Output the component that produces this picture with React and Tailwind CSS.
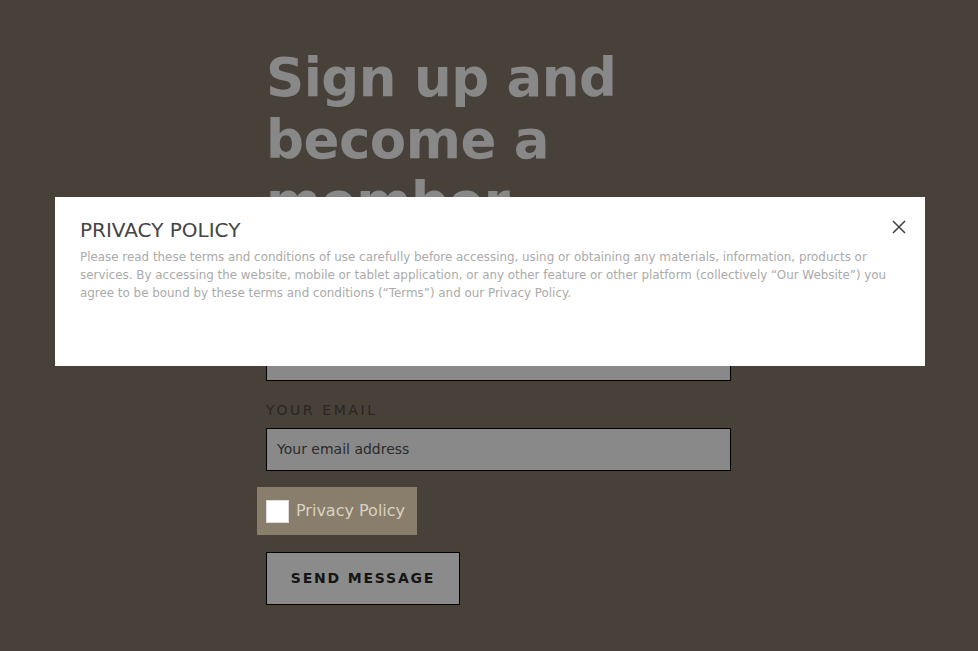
import React from "react";

export default function App() {
  const font = { fontFamily: "'DejaVu Sans', 'Noto Sans', sans-serif" };
  return (
    <div className="relative w-[978px] h-[651px] overflow-hidden bg-[#48413a]" style={font}>
      <div className="ml-[266px] w-[465px] pt-[47px]">
        <h1 className="text-[53px] font-bold leading-[62px] text-[#888888] tracking-[-0.5px]">
          Sign up and become a member
        </h1>
        <div className="mt-[77px] text-[14px] tracking-[2.6px] text-[#2a2620] leading-[20px]">YOUR NAME</div>
        <div className="mt-[8px] h-[43px] border border-black bg-[#898989]"></div>
        <div className="mt-[19px] text-[14px] tracking-[2.6px] text-[#2a2620] leading-[20px]">YOUR EMAIL</div>
        <div className="mt-[8px] h-[43px] border border-black bg-[#898989] flex items-center px-[10px] text-[14px] text-[#2b2b2b]">
          Your email address
        </div>
        <div className="mt-[16px] -ml-[9px] inline-flex items-center h-[48px] pl-[9px] pr-[12px] bg-[#897e6b]">
          <div className="w-[23px] h-[23px] bg-white border border-[#ddd]"></div>
          <span className="ml-[7px] text-[16px] text-[#d9d2c3]">Privacy Policy</span>
        </div>
        <div className="mt-[17px]">
          <button className="w-[194px] h-[53px] border border-black bg-[#8b8b8b] text-[14px] font-bold tracking-[1.8px] text-[#151515]" style={font}>
            SEND MESSAGE
          </button>
        </div>
      </div>

      <div className="absolute left-[55px] top-[197px] w-[870px] h-[169px] bg-white px-[25px] pt-[20px]">
        <div className="text-[20px] leading-[26px] text-[#444444]">PRIVACY POLICY</div>
        <p className="mt-[5px] w-[820px] text-[11.9px] leading-[18px] text-[#aaaaaa]">
          Please read these terms and conditions of use carefully before accessing, using or obtaining any materials, information, products or services. By accessing the website, mobile or tablet application, or any other feature or other platform (collectively “Our Website”) you agree to be bound by these terms and conditions (“Terms”) and our Privacy Policy.
        </p>
        <div className="absolute right-[18px] top-[22px] w-[16px] h-[16px]">
          <svg viewBox="0 0 16 16" width="16" height="16">
            <path d="M2 2 L14 14 M14 2 L2 14" stroke="#444" strokeWidth="1.6" fill="none" />
          </svg>
        </div>
      </div>
    </div>
  );
}
